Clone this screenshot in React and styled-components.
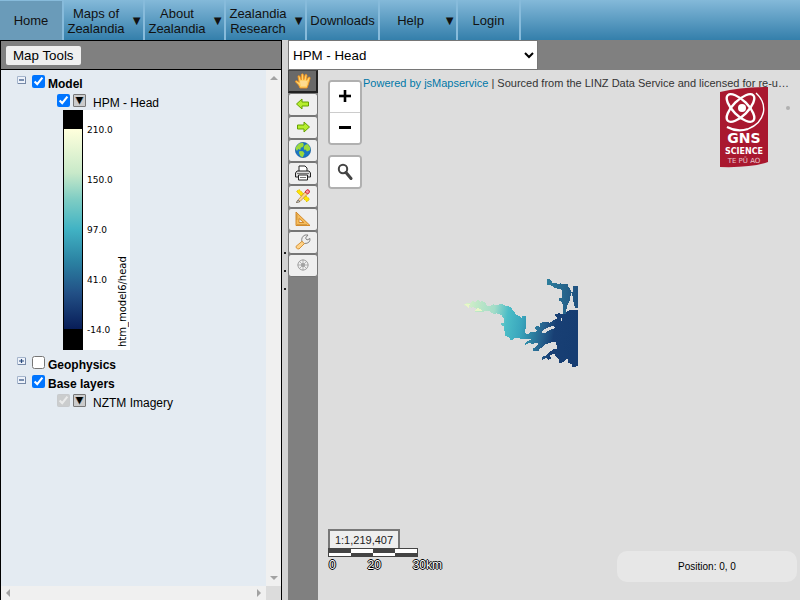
import React from "react";
import styled, { createGlobalStyle, css } from "styled-components";

const GlobalStyle = createGlobalStyle`
  *, *::before, *::after { box-sizing: border-box; }
  body { margin: 0; font-family: "Liberation Sans", Arial, sans-serif; color: #000; }
  button, input, select { font-family: inherit; margin: 0; }
`;

const Page = styled.div`
  display: flex;
  flex-direction: column;
  height: 100vh;
  overflow: hidden;
`;

/* ---------- navigation ---------- */

const NavBar = styled.nav`
  display: flex;
  flex: none;
  height: 40px;
  background: linear-gradient(#84b9d9, #347fab);
`;

const NavItem = styled.a`
  display: flex;
  align-items: center;
  width: ${(p) => p.$width}px;
  padding: 1px 2px 0;
  border-right: 2px solid #87bbdb;
  color: #111;
  font-size: 13px;
  line-height: 15px;
  text-align: center;
  text-decoration: none;
  white-space: pre-line;
  ${(p) => p.$active && css`
    padding-top: 0;
    border-top: 1px solid #87bbdb;
    background: #6a9bb9;
  `}
`;

const NavLabel = styled.span`
  flex: 1;
`;

const NavArrow = styled.span`
  flex: none;
  width: 17px;
  margin-right: -2px;
  text-align: right;
`;

/* ---------- left panel ---------- */

const Main = styled.div`
  display: flex;
  flex: 1;
  min-height: 0;
`;

const LeftPanel = styled.aside`
  display: flex;
  flex-direction: column;
  flex: none;
  width: 282px;
  border: solid #000;
  border-width: 1px 1px 0;
`;

const PanelHeader = styled.div`
  display: flex;
  align-items: center;
  flex: none;
  height: 29px;
  padding-left: 5px;
  background: #808080;
  border-bottom: 1px solid #000;
`;

const MapToolsButton = styled.button`
  height: 19px;
  padding: 0 7px;
  border: 0;
  border-radius: 2px;
  background: #efefef;
  line-height: 19px;
`;

const ScrollArea = styled.div`
  display: grid;
  grid-template-columns: 1fr 15px;
  grid-template-rows: 1fr 14px;
  flex: 1;
  min-height: 0;
`;

const ScrollTrack = styled.div`
  display: flex;
  flex-direction: ${(p) => (p.$vertical ? "column" : "row")};
  justify-content: space-between;
  align-items: center;
  padding: ${(p) => (p.$vertical ? "5px 0" : "0 4px")};
  background: #f0f0f0;
  color: #a2a2a2;
  svg { display: block; fill: currentColor; }
`;

const ScrollCorner = styled.div`
  background: #dcdcdc;
`;

const Tree = styled.ul`
  margin: 0;
  padding: 2px 0 0;
  overflow: hidden;
  list-style: none;
  background: #e4ebf2;
  font-size: 12px;
`;

const Branch = styled.ul`
  margin: 0;
  padding: 0;
  list-style: none;
`;

const TreeRow = styled.div`
  display: flex;
  align-items: flex-start;
  height: 19px;
  padding-top: 3px;
  padding-left: ${(p) => (p.$child ? 56 : 16)}px;
`;

const Toggle = styled.button`
  width: 9px;
  height: 9px;
  margin: 1px 6px 0 0;
  padding: 0;
  border: 0;
  background: none;
  svg { display: block; }
`;

const Check = styled.input`
  flex: none;
  width: 13px;
  height: 13px;
`;

const MenuButton = styled.button`
  display: flex;
  align-items: center;
  justify-content: center;
  width: 13px;
  height: 13px;
  margin-left: 3px;
  padding: 0;
  border: 1px solid #777;
  border-radius: 1px;
  background: #ccc;
`;

const RowLabel = styled.label`
  margin-left: ${(p) => (p.$child ? 7 : 3)}px;
  padding-top: 2px;
  line-height: 14px;
  font-weight: ${(p) => (p.$child ? 400 : 700)};
`;

const Legend = styled.div`
  display: flex;
  width: 67px;
  height: 240px;
  margin: 0 0 3px 62px;
  background: #fff;
  font: 9px/12px "DejaVu Sans", sans-serif;
`;

const Ramp = styled.div`
  width: 20px;
  border: solid #000;
  border-width: 19px 1px 21px;
  background: linear-gradient(#ffffdc, #c8e9c9 22%, #7fcdc4 35%, #41b3c4 50%, #2b83a3 66%, #225086 82%, #081d58);
`;

const RampValues = styled.div`
  display: flex;
  flex: 1;
  flex-direction: column;
  justify-content: space-between;
  padding: 14px 0 14px 4px;
`;

const RampTitle = styled.div`
  width: 14px;
  padding: 3px 0;
  font-size: 10px;
  line-height: 14px;
  writing-mode: vertical-rl;
  transform: rotate(180deg);
  white-space: nowrap;
`;

/* ---------- right panel ---------- */

const Splitter = styled.div`
  display: flex;
  flex: none;
  flex-direction: column;
  align-items: center;
  justify-content: center;
  gap: 16px;
  width: 6px;
  padding-bottom: 98px;
  background: #d3d3d3;
`;

const Grip = styled.span`
  width: 2px;
  height: 2px;
  background: #222;
`;

const RightPanel = styled.section`
  display: flex;
  flex: 1;
  flex-direction: column;
  min-width: 0;
`;

const LayerBar = styled.div`
  flex: none;
  height: 30px;
  background: #808080;
`;

const LayerSelect = styled.select`
  display: block;
  width: 250px;
  height: 30px;
  padding: 0;
  border: 1px solid #767676;
  border-radius: 0;
  background: #fff;
`;

const Workspace = styled.div`
  display: flex;
  flex: 1;
  min-height: 0;
`;

const ToolColumn = styled.div`
  display: flex;
  flex: none;
  flex-direction: column;
  width: 30px;
  background: #808080;
`;

const ToolButton = styled.button`
  display: flex;
  align-items: center;
  justify-content: center;
  width: 30px;
  height: 23px;
  padding: 0 0 1px;
  border: 1px solid #767676;
  border-radius: 3px;
  background: #efefef;
  ${(p) => p.$active && css`
    border: 1px solid #444;
    border-right: 2px solid #222;
    border-bottom: 2px solid #222;
    border-radius: 0;
    background: #696969;
  `}
`;

const MapView = styled.main`
  position: relative;
  flex: 1;
  min-width: 0;
  overflow: hidden;
  background: #ddd;
`;

const MapControls = styled.div`
  position: absolute;
  top: 10px;
  left: 10px;
  display: flex;
  flex-direction: column;
  gap: 10px;
`;

const ControlGroup = styled.div`
  width: 34px;
  border: 2px solid #b0b0b0;
  border-radius: 4px;
  background: #fff;
`;

const ControlButton = styled.button`
  display: flex;
  align-items: center;
  justify-content: center;
  width: 30px;
  height: 30px;
  padding: 0 0 3px;
  border: 0;
  border-radius: 2px;
  background: #fff;
  & + & { height: 31px; border-top: 1px solid #ccc; border-radius: 0 0 2px 2px; }
`;

const Attribution = styled.div`
  position: absolute;
  top: 6px;
  left: 45px;
  right: 11px;
  overflow: hidden;
  font-size: 11px;
  line-height: 14px;
  white-space: nowrap;
  text-overflow: ellipsis;
  color: #333;
  a { color: #0078a8; text-decoration: none; }
`;

const LogoLink = styled.a`
  position: absolute;
  top: 17px;
  right: 32px;
  svg { display: block; }
`;

const Dot = styled.span`
  position: absolute;
  top: 36px;
  right: 10px;
  width: 4px;
  height: 4px;
  border-radius: 50%;
  background: #b0b0b0;
`;

const Raster = styled.svg`
  position: absolute;
  top: 200px;
  left: 137px;
`;

const ScaleBox = styled.div`
  position: absolute;
  top: 459px;
  left: 10px;
  width: 114px;
  color: #fff;
  font-size: 12px;
`;

const ScaleInput = styled.input`
  display: block;
  width: 72px;
  height: 19px;
  padding: 0;
  border: 2px solid #777;
  border-bottom: 0;
  background: #eee;
  color: #222;
  font-size: 11px;
  text-align: center;
`;

const ScaleBar = styled.div`
  display: grid;
  grid-template-columns: repeat(4, 22px);
  grid-template-rows: 4px 3px;
  width: 90px;
  border: 1px solid #444;
  background: #444;
`;

const ScaleCell = styled.span`
  background: ${(p) => (p.$dark ? "#444" : "#fff")};
`;

const ScaleLabels = styled.div`
  display: flex;
  justify-content: space-between;
  padding-top: 1px;
  padding-left: 1px;
  line-height: 14px;
  text-shadow: -1px 0 #000, 0 1px #000, 1px 0 #000, 0 -1px #000;
`;

const PositionBox = styled.div`
  position: absolute;
  right: 3px;
  bottom: 18px;
  width: 180px;
  height: 31px;
  border-radius: 10px;
  background: #e7e7e7;
  font-size: 10px;
  line-height: 31px;
  text-align: center;
`;

/* ---------- drawings ---------- */

const Icon = ({ children }) => (
  <svg width="16" height="16" viewBox="0 0 16 16" aria-hidden="true">{children}</svg>
);

const arrowPath = "M1.5 8 L7 3 V6 H13.5 V10 H7 V13 Z";

const tools = [
  { name: "Pan", icon: (
    <Icon><path d="M5 15 L3.6 12 L.6 9 Q0 7.6 1.7 7.8 L4.2 9.3 L3 3.7 Q3.1 2 4.7 3 L6.3 7 L6.3 1.5 Q7.2 .1 8.3 1.4 L8.8 6.7 L10.2 1.8 Q11.3 .8 12 2.2 L11.5 7.2 L13.6 4.2 Q15.2 3.6 15.1 5.2 L13.5 11 L12 15 Z" fill="#ffd36b" stroke="#f2921d" strokeWidth=".9" /><path d="M5 8 L12 8 L11.5 13 H6 Z" fill="#ffe0a0" opacity=".7" /></Icon>
  ) },
  { name: "Previous extent", icon: <Icon><path d={arrowPath} fill="#b6ee2e" stroke="#64a000" /></Icon> },
  { name: "Next extent", icon: <Icon><g transform="translate(16 0) scale(-1 1)"><path d={arrowPath} fill="#b6ee2e" stroke="#64a000" /></g></Icon> },
  { name: "Full extent", icon: (
    <Icon><circle cx="8" cy="8" r="7.6" fill="#1976c5" stroke="#145b9c" strokeWidth=".7" /><path d="M1 5 L4 1.5 L8 .8 L8.8 3 L7.8 5 L5.8 5.8 L5.3 8 L3.2 7 L2 9 L.6 7 Z M10 3 L12.5 2 L15 5.2 L15.2 8 L12 9.5 L10.5 7.6 L9 7.8 L8.7 5 Z M4.5 9 L8 9.3 L9.5 11.5 L7.7 15.2 L5.4 14.2 L4 11 Z" fill="#9cd93a" /></Icon>
  ) },
  { name: "Print", icon: (
    <Icon><path d="M4 6 V1 H10 L12 3 V6" fill="#fff" stroke="#222" /><path d="M2 6 H14 L15.5 8 V12 H.5 V8 Z" fill="#ddd" stroke="#222" /><path d="M3.5 10 H12.5 V15 H3.5 Z" fill="#fff" stroke="#222" /><path d="M2 8.5 H14 M5 12.5 H11" stroke="#777" /></Icon>
  ) },
  { name: "Draw", icon: (
    <Icon><path d="M1.5 3.5 L4 1.5 L14.5 11 L12 14 Z" fill="#ffe500" stroke="#d3ad00" strokeWidth=".8" strokeDasharray="2 1" /><path d="M3 12 L10.5 3.5 L13 5.5 L5 13.5 L1.5 14.5 Z" fill="#ffd58e" stroke="#a77b38" strokeWidth=".7" /><path d="M10 4 L12 1.7 Q14.7 1.5 14.5 4 L12.8 6 Z" fill="#f79aa5" stroke="#d22536" /><path d="M1.5 14.5 L3 12 L5 13.5 Z" fill="#fff" stroke="#555" strokeWidth=".7" /></Icon>
  ) },
  { name: "Measure", icon: (
    <Icon><path fillRule="evenodd" d="M1 1 V14.5 H15 Z M4 7.5 V11.5 H8.8 Z" fill="#f6bd5d" stroke="#cf811e" strokeWidth=".9" /><path d="M3 13 V14 M5 13 V14 M7 13 V14 M9 13 V14 M11 13 V14 M1.5 4 H2.5 M1.5 6 H2.5 M1.5 8 H2.5" stroke="#95611b" strokeWidth=".7" /></Icon>
  ) },
  { name: "Settings", icon: (
    <Icon><path d="M7 8 Q5.7 3 10 1 L13 1 L10.5 4 L12 6 L15 4.5 Q15.4 9.5 9.5 9.5 L8.5 10 Z" fill="#eee" stroke="#777" strokeWidth=".9" /><path d="M1 12.4 L7 7.3 L9.4 9.6 L4 15 Q2.7 15.3 1 13.5 Z" fill="#ffd389" stroke="#d18a2b" strokeWidth=".9" /></Icon>
  ) },
  { name: "Locate", icon: (
    <Icon><g fill="none" stroke="#999" strokeWidth=".9"><circle cx="8" cy="8" r="5.1" /><circle cx="8" cy="8" r="1.5" /><path d="M8 2.5 V13.5 M2.5 8 H13.5 M4.2 4.2 L11.8 11.8 M11.8 4.2 L4.2 11.8" strokeWidth=".7" /></g></Icon>
  ) },
];

const GnsLogo = () => (
  <svg width="48" height="81" viewBox="0 0 48 81" role="img" aria-label="GNS Science Te Pū Ao">
    <path d="M0 5 Q20 0 48 0 V75 Q32 81 0 80 Z" fill="#a9182f" />
    <g fill="none" stroke="#fff">
      <ellipse cx="20.5" cy="21" rx="18" ry="7.5" transform="rotate(45 20.5 21)" strokeWidth="2.4" />
      <ellipse cx="20.5" cy="21" rx="18" ry="7.5" transform="rotate(-45 20.5 21)" strokeWidth="2.4" />
      <path d="M36 6 Q45 14 43.5 25 Q41 37 28 42" strokeWidth="1.4" />
      <path d="M28 42 Q17 45.5 7 40" strokeWidth="2.2" />
    </g>
    <circle cx="22" cy="21" r="4" fill="#fff" />
    <g fill="#fff" textAnchor="middle" fontFamily="DejaVu Sans, sans-serif">
      <text x="24" y="56" fontSize="14" fontWeight="700">GNS</text>
      <text x="24" y="67" fontSize="8" fontWeight="700">SCIENCE</text>
      <text x="24" y="76" fontSize="7" opacity=".75">TE PŪ AO</text>
    </g>
  </svg>
);

const HeadRaster = () => (
  <Raster width="135" height="105" viewBox="0 0 405 315" shapeRendering="crispEdges" aria-label="HPM - Head">
    <defs>
      <linearGradient id="head" gradientUnits="userSpaceOnUse" x1="24" y1="90" x2="368" y2="150">
        <stop offset="0" stopColor="#dff3cb" />
        <stop offset=".12" stopColor="#c1e8c7" />
        <stop offset=".28" stopColor="#a2dcc8" />
        <stop offset=".4" stopColor="#4bbdc7" />
        <stop offset=".53" stopColor="#3aa6bd" />
        <stop offset=".64" stopColor="#2c7fa0" />
        <stop offset=".73" stopColor="#265f8c" />
        <stop offset=".82" stopColor="#183f74" />
        <stop offset="1" stopColor="#163d72" />
      </linearGradient>
      <linearGradient id="arm" x1="0" x2="1"><stop offset="0" stopColor="#2d7e9c" /><stop offset="1" stopColor="#20517f" /></linearGradient>
    </defs>
    <path fill="url(#head)" d="M24 102 H33 V98 H48 L54 93 L60 96 L66 90 H72 L76 95 L82 91 L84 96 H90 L94 104 L102 110 L116 103 L126 106 L138 101 L150 107 L160 108 L168 113 L177 125 L184 134 L195 139 L202 145 V139 H212 V148 L214 153 V173 L210 179 V187 L216 194 L230 185 H240 L248 183 L240 174 L243 166 L255 171 V161 L265 156 H279 L284 159 L294 152 L308 145 L302 139 L299 134 L309 130 L323 131 H331 L338 124 L345 119 H369 V288 H363 V291 H351 V283 L339 278 L337 264 L329 274 L324 276 L319 280 H312 V268 L303 260 L298 251 L285 256 L289 266 L280 270 L273 264 L262 270 V260 L273 256 L282 248 L293 239 L305 236 V225 L302 217 L290 216 L281 220 L270 224 L261 233 H255 L251 243 L235 242 V235 L243 230 L250 220 L240 219 L231 224 L224 218 L211 225 V218 L221 212 L231 207 H195 V204 L179 203 L172 209 H166 L163 203 L150 197 V187 L147 178 V168 L139 166 V160 L147 159 V146 L139 135 L124 130 L119 133 L109 129 L105 124 L94 124 L81 125 H60 L66 119 L57 112 L47 113 L43 109 L40 113 L34 108 Z" />
    <path fill="url(#arm)" d="M276 28 L282 26 L288 31 L292 40 H306 L313 43 L317 39 L323 43 L338 43 V50 L344 55 L348 65 H354 V48 H369 V114 H360 L355 95 L351 68 H348 L345 90 L337 105 L332 132 H324 V104 L318 92 H312 V83 H321 V63 L314 56 L299 55 L292 49 L282 44 H276 Z" />
    <path fill="#ddd" d="M260 183 L271 177 L282 171 L298 166 L299 175 L286 179 L270 189 L261 190 Z M317 144 H321 V152 H317 Z" />
    <path fill="#e9f6c8" d="M30 101 H44 V105 L41 113 L34 108 Z M60 121 L68 114 L77 117 L83 124 H61 Z" />
  </Raster>
);

const TreeToggle = ({ label, open }) => (
  <Toggle aria-label={label} aria-expanded={open}>
    <svg width="9" height="9" viewBox="0 0 9 9">
      <path d="M.5 .5 H8.5 V7.5 H.5 Z" fill="#edf2fa" stroke="#a5b5cc" />
      <path d="M1 7.5 H9 M8.5 1 V8" stroke="#7689a7" />
      <path d={open ? "M2 4 H7" : "M2 4 H7 M4.5 2 V6"} stroke="#294a7c" strokeWidth="1.2" />
    </svg>
  </Toggle>
);

const Group = ({ id, label, open, checked, children }) => (
  <li>
    <TreeRow>
      <TreeToggle label={`Toggle ${label}`} open={open} />
      <Check id={id} type="checkbox" defaultChecked={checked} />
      <RowLabel htmlFor={id}>{label}</RowLabel>
    </TreeRow>
    {children && <Branch>{children}</Branch>}
  </li>
);

const Layer = ({ id, label, disabled, children }) => (
  <li>
    <TreeRow $child>
      <Check id={id} type="checkbox" defaultChecked disabled={disabled} />
      <MenuButton aria-label={`${label} options`}>
        <svg width="9" height="9" viewBox="0 0 9 9">
          <path d="M0 1 H4.5 V9 Z" fill="#a86a38" />
          <path d="M9 1 H4.5 V9 Z" fill="#4b91c5" />
          <path d="M1 1 H8 L4.5 8 Z" fill="#000" />
        </svg>
      </MenuButton>
      <RowLabel $child htmlFor={id}>{label}</RowLabel>
    </TreeRow>
    {children}
  </li>
);

const navItems = [
  { label: "Home", width: 64, active: true },
  { label: "Maps of\nZealandia", width: 81, menu: true },
  { label: "About\nZealandia", width: 81, menu: true },
  { label: "Zealandia\nResearch", width: 81, menu: true },
  { label: "Downloads", width: 73 },
  { label: "Help", width: 78, menu: true },
  { label: "Login", width: 63 },
];

const scaleCells = [true, false, true, false, false, true, false, true];

export default function App() {
  return (
    <Page>
      <GlobalStyle />
      <NavBar>
        {navItems.map((item) => (
          <NavItem key={item.label} href="#" $width={item.width} $active={item.active}>
            <NavLabel>{item.label}</NavLabel>
            {item.menu && <NavArrow>▼</NavArrow>}
          </NavItem>
        ))}
      </NavBar>
      <Main>
        <LeftPanel>
          <PanelHeader><MapToolsButton>Map Tools</MapToolsButton></PanelHeader>
          <ScrollArea>
            <Tree>
              <Group id="model" label="Model" open checked>
                <Layer id="hpm" label="HPM - Head">
                  <Legend>
                    <Ramp />
                    <RampValues>
                      {["210.0", "150.0", "97.0", "41.0", "-14.0"].map((v) => <span key={v}>{v}</span>)}
                    </RampValues>
                    <RampTitle>htm_model6/head</RampTitle>
                  </Legend>
                </Layer>
              </Group>
              <Group id="geophysics" label="Geophysics" open={false} checked={false} />
              <Group id="base" label="Base layers" open checked>
                <Layer id="nztm" label="NZTM Imagery" disabled />
              </Group>
            </Tree>
            <ScrollTrack $vertical>
              <svg width="8" height="5"><path d="M0 5 L4 1 L8 5 Z" /></svg>
              <svg width="8" height="5"><path d="M0 0 L4 4 L8 0 Z" /></svg>
            </ScrollTrack>
            <ScrollTrack>
              <svg width="5" height="8"><path d="M5 0 L1 4 L5 8 Z" /></svg>
              <svg width="5" height="8"><path d="M0 0 L4 4 L0 8 Z" /></svg>
            </ScrollTrack>
            <ScrollCorner />
          </ScrollArea>
        </LeftPanel>
        <Splitter><Grip /><Grip /><Grip /></Splitter>
        <RightPanel>
          <LayerBar>
            <LayerSelect aria-label="Active layer" defaultValue="head">
              <option value="head">HPM - Head</option>
            </LayerSelect>
          </LayerBar>
          <Workspace>
            <ToolColumn>
              {tools.map((tool, i) => (
                <ToolButton key={tool.name} aria-label={tool.name} $active={i === 0}>{tool.icon}</ToolButton>
              ))}
            </ToolColumn>
            <MapView>
              <HeadRaster />
              <Attribution>
                <a href="#">Powered by jsMapservice</a> | Sourced from the LINZ Data Service and licensed for re-use
              </Attribution>
              <LogoLink href="#"><GnsLogo /></LogoLink>
              <Dot />
              <MapControls>
                <ControlGroup>
                  <ControlButton aria-label="Zoom in">
                    <svg width="12" height="12"><path d="M0 5 H5 V0 H7 V5 H12 V7 H7 V12 H5 V7 H0 Z" stroke="#000" strokeWidth=".6" /></svg>
                  </ControlButton>
                  <ControlButton aria-label="Zoom out">
                    <svg width="12" height="12"><path d="M0 5 H12 V8 H0 Z" /></svg>
                  </ControlButton>
                </ControlGroup>
                <ControlGroup>
                  <ControlButton aria-label="Search">
                    <svg width="16" height="18" viewBox="0 -1 16 18" fill="none" stroke="#444">
                      <circle cx="6" cy="6" r="4.2" strokeWidth="2" />
                      <path d="M9 9.5 L14 15.5" strokeWidth="3" strokeLinecap="round" />
                    </svg>
                  </ControlButton>
                </ControlGroup>
              </MapControls>
              <ScaleBox>
                <ScaleInput aria-label="Map scale" defaultValue="1:1,219,407" />
                <ScaleBar>{scaleCells.map((dark, i) => <ScaleCell key={i} $dark={dark} />)}</ScaleBar>
                <ScaleLabels><span>0</span><span>20</span><span>30km</span></ScaleLabels>
              </ScaleBox>
              <PositionBox>Position: 0, 0</PositionBox>
            </MapView>
          </Workspace>
        </RightPanel>
      </Main>
    </Page>
  );
}
